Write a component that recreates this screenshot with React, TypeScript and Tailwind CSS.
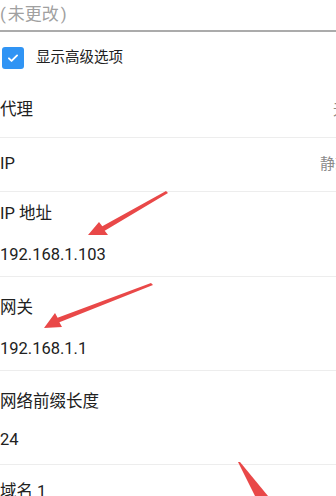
import React from "react";

// Red annotation arrows that sit on top of the settings list
function Arrows() {
  return (
    <svg className="pointer-events-none absolute inset-0" width="336" height="496" viewBox="0 0 336 496">
      <polygon
        fill="#e94848"
        points="166,191 168,193 104.7,230.7 108,235 88,235 99,222 102.3,226.3"
      />
      <polygon
        fill="#e94848"
        points="151,283 153,285 59.4,322.3 62,327 44,328 55,313 57.6,317.7"
      />
      <polygon fill="#e94848" points="238,462 240,462 268,496 255,496" />
    </svg>
  );
}

function Field({ label, value, top, gap, bottom }: { label: string; value: string; top: string; gap: string; bottom: string }) {
  return (
    <div className={`flex flex-col border-b border-[#ededed] ${top} ${bottom}`}>
      <div className="h-[20px] flex items-center text-[16.5px] text-[#212121]">{label}</div>
      <div className={`h-[20px] flex items-center text-[16.5px] text-[#212121] ${gap}`}>{value}</div>
    </div>
  );
}

export default function App() {
  return (
    <div
      className="relative w-[336px] h-[496px] overflow-hidden bg-white"
      style={{ fontFamily: 'Roboto, "Noto Sans CJK SC", sans-serif' }}
    >
      <div className="h-[30px] flex items-center text-[17px] text-[#a0a0a0]">
        (<span className="mx-[2px]">未更改</span>)
      </div>
      <div className="h-[2px] bg-[#ababab]" />

      {/* advanced options checkbox */}
      <div className="h-[52px] flex items-center gap-3 pl-[2px]">
        <div className="w-[22px] h-[22px] shrink-0 rounded-[3px] bg-[#3094f4] flex items-center justify-center">
          <svg width="14" height="14" viewBox="0 0 24 24" fill="none" stroke="white" strokeWidth="3.2" strokeLinecap="round" strokeLinejoin="round">
            <path d="M5 12.5l4.5 4.5L19 7.5" />
          </svg>
        </div>
        <span className="text-[14.5px] text-[#212121]">显示高级选项</span>
      </div>

      <div className="h-[54px] flex items-center border-b border-[#ededed]">
        <span className="text-[16.5px] text-[#212121]">代理</span>
        <span className="ml-auto mr-[-12px] text-[15px] text-[#8a8a8a]">无</span>
      </div>

      <div className="h-[54px] flex items-center border-b border-[#ededed]">
        <span className="text-[16.5px] text-[#212121]">IP</span>
        <span className="ml-auto mr-[-14px] text-[15px] text-[#8a8a8a]">静态</span>
      </div>

      <Field label="IP 地址" value="192.168.1.103" top="pt-[12px]" gap="mt-[21px]" bottom="pb-[11px]" />
      <Field label="网关" value="192.168.1.1" top="pt-[21px]" gap="mt-[21px]" bottom="pb-[11px]" />
      <Field label="网络前缀长度" value="24" top="pt-[21px]" gap="mt-[18px]" bottom="pb-[14px]" />

      <div className="pt-[17px]">
        <div className="h-[20px] flex items-center text-[16.5px] text-[#212121]">域名 1</div>
      </div>

      <Arrows />
    </div>
  );
}
